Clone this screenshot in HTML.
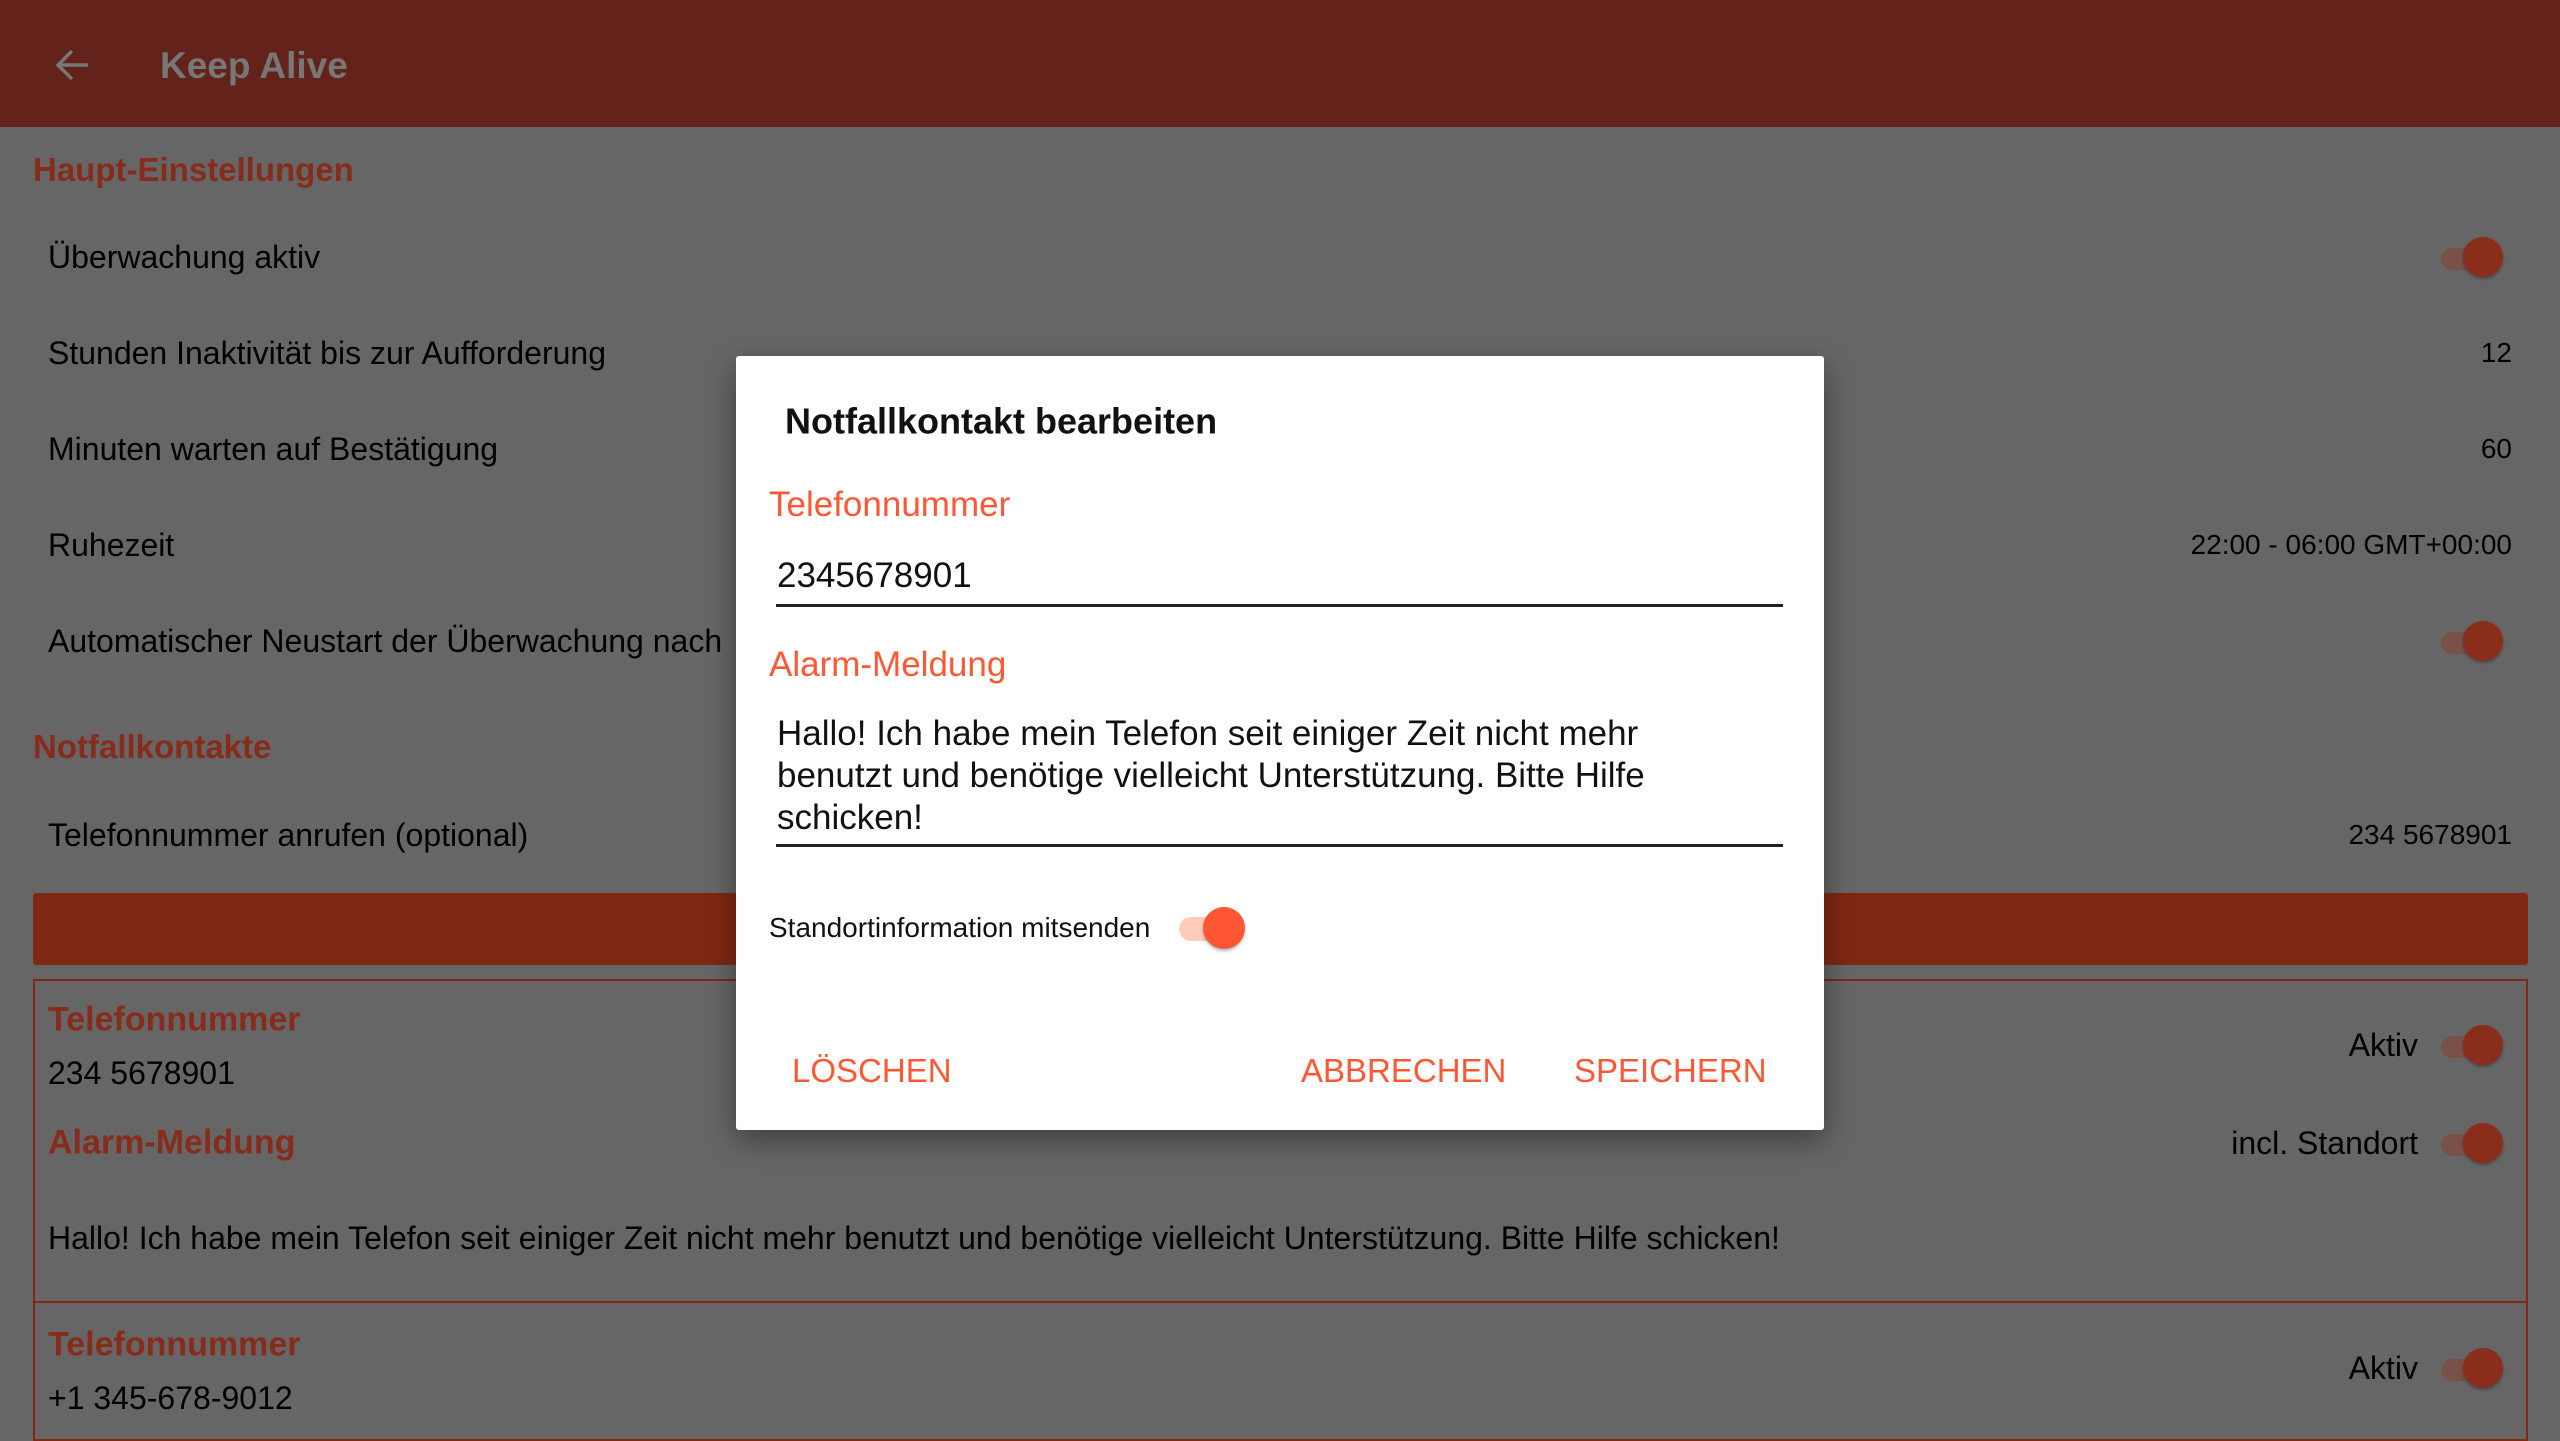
<!DOCTYPE html>
<html><head><meta charset="utf-8"><style>
*{margin:0;padding:0;box-sizing:border-box}
body{width:2560px;height:1432px;overflow:hidden;background:#666;font-family:"Liberation Sans",sans-serif;position:relative}
.t{position:absolute;transform:translateY(-50%);line-height:1.2;white-space:nowrap;color:#000}
.r{right:48px;text-align:right}
.h{color:#872c1a;font-weight:bold}
.sw{position:absolute;width:66px;height:40px}
.sw .tr{position:absolute;left:2px;top:11px;width:56px;height:22px;border-radius:11px;background:#7a5148}
.sw .th{position:absolute;right:2px;top:0;width:40px;height:40px;border-radius:50%;background:#8a2d1b;box-shadow:0 2px 3px rgba(0,0,0,.3)}
.dlg{position:absolute;left:736px;top:356px;width:1088px;height:774px;background:#fff;border-radius:3px;box-shadow:0 10px 30px rgba(0,0,0,.4)}
.o{color:#ff5733}
.btn{color:#ff5733;font-size:33px}
</style></head><body>
<div style="position:absolute;left:0;top:0;width:2560px;height:127px;background:#63221a"></div>
<svg style="position:absolute;left:54px;top:48px" width="36" height="34" viewBox="0 0 36 34"><path d="M34 17H4M18 3L4 17l14 14" stroke="#777" stroke-width="3.5" fill="none"/></svg>
<div class="t" style="left:160px;top:66px;font-size:37px;color:#777;font-weight:bold">Keep Alive</div>

<div class="t h" style="left:33px;top:170px;font-size:33px">Haupt-Einstellungen</div>
<div class="t" style="left:48px;top:257px;font-size:32px">Überwachung aktiv</div>
<div class="t" style="left:48px;top:353px;font-size:32px">Stunden Inaktivität bis zur Aufforderung</div>
<div class="t" style="left:48px;top:449px;font-size:32px">Minuten warten auf Bestätigung</div>
<div class="t" style="left:48px;top:545px;font-size:32px">Ruhezeit</div>
<div class="t" style="left:48px;top:641px;font-size:32px">Automatischer Neustart der Überwachung nach</div>
<div class="t r" style="top:353px;font-size:28px">12</div>
<div class="t r" style="top:449px;font-size:28px">60</div>
<div class="t r" style="top:545px;font-size:28px">22:00 - 06:00 GMT+00:00</div>
<div class="sw" style="left:2439px;top:237px"><div class="tr"></div><div class="th"></div></div>
<div class="sw" style="left:2439px;top:621px"><div class="tr"></div><div class="th"></div></div>

<div class="t h" style="left:33px;top:747px;font-size:33px">Notfallkontakte</div>
<div class="t" style="left:48px;top:835px;font-size:32px">Telefonnummer anrufen (optional)</div>
<div class="t r" style="top:835px;font-size:28px">234 5678901</div>
<div style="position:absolute;left:33px;top:893px;width:2495px;height:72px;background:#7f2814;border-radius:3px"></div>

<div style="position:absolute;left:33px;top:979px;width:2495px;height:324px;border:2px solid #7f2814"></div>
<div class="t h" style="left:48px;top:1020px;font-size:34px">Telefonnummer</div>
<div class="t" style="left:48px;top:1073px;font-size:32px">234 5678901</div>
<div class="t h" style="left:48px;top:1143px;font-size:34px">Alarm-Meldung</div>
<div class="t" style="left:48px;top:1238px;font-size:32px">Hallo! Ich habe mein Telefon seit einiger Zeit nicht mehr benutzt und benötige vielleicht Unterstützung. Bitte Hilfe schicken!</div>
<div class="t" style="right:142px;top:1045px;font-size:32px">Aktiv</div>
<div class="t" style="right:142px;top:1143px;font-size:32px">incl. Standort</div>
<div class="sw" style="left:2439px;top:1025px"><div class="tr"></div><div class="th"></div></div>
<div class="sw" style="left:2439px;top:1123px"><div class="tr"></div><div class="th"></div></div>

<div style="position:absolute;left:33px;top:1301px;width:2495px;height:140px;border:2px solid #7f2814"></div>
<div class="t h" style="left:48px;top:1345px;font-size:34px">Telefonnummer</div>
<div class="t" style="left:48px;top:1398px;font-size:32px">+1 345-678-9012</div>
<div class="t" style="right:142px;top:1368px;font-size:32px">Aktiv</div>
<div class="sw" style="left:2439px;top:1348px"><div class="tr"></div><div class="th"></div></div>

<div class="dlg"></div>
<div class="t" style="left:785px;top:421px;font-size:36px;font-weight:bold;color:#111">Notfallkontakt bearbeiten</div>
<div class="t o" style="left:769px;top:505px;font-size:35px">Telefonnummer</div>
<div class="t" style="left:777px;top:576px;font-size:35px;color:#111">2345678901</div>
<div style="position:absolute;left:776px;top:604px;width:1007px;height:3px;background:#222"></div>
<div class="t o" style="left:769px;top:665px;font-size:35px">Alarm-Meldung</div>
<div style="position:absolute;left:777px;top:713px;font-size:35px;line-height:42px;color:#111">Hallo! Ich habe mein Telefon seit einiger Zeit nicht mehr<br>benutzt und benötige vielleicht Unterstützung. Bitte Hilfe<br>schicken!</div>
<div style="position:absolute;left:776px;top:844px;width:1007px;height:3px;background:#222"></div>
<div class="t" style="left:769px;top:928px;font-size:28px;color:#111">Standortinformation mitsenden</div>
<div class="sw" style="left:1179px;top:907px;width:66px;height:42px">
 <div class="tr" style="background:#ffccbc;left:0;top:10px;width:60px;height:24px;border-radius:12px"></div>
 <div class="th" style="background:#ff5733;width:42px;height:42px;right:0"></div>
</div>
<div class="t btn" style="left:792px;top:1071px">LÖSCHEN</div>
<div class="t btn" style="left:1301px;top:1071px">ABBRECHEN</div>
<div class="t btn" style="left:1574px;top:1071px">SPEICHERN</div>
</body></html>
